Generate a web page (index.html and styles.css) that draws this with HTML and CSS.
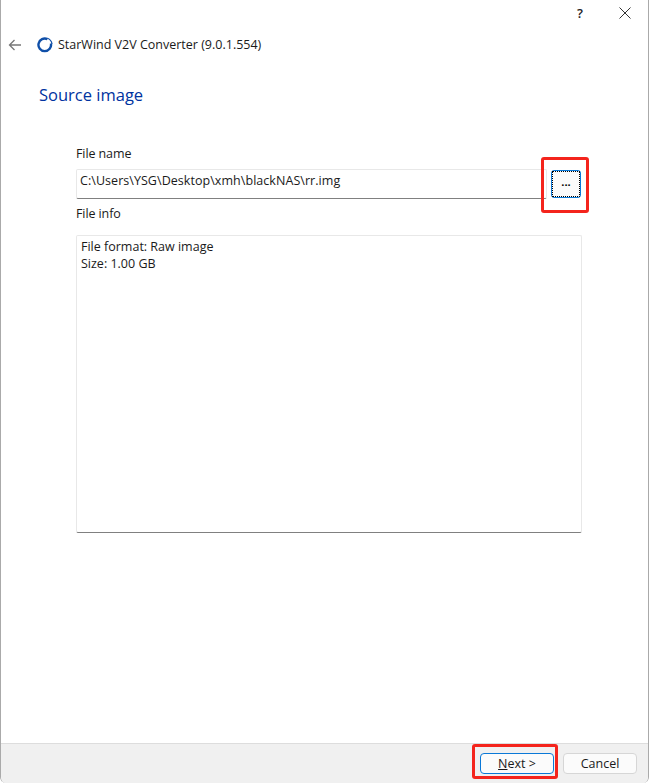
FILE: index.html
```html
<!DOCTYPE html>
<html lang="en">
<head>
<meta charset="utf-8">
<title>StarWind V2V Converter</title>
<link rel="stylesheet" href="styles.css">
</head>
<body>
<div class="window">
  <div class="titlebar">
    <span class="help">?</span>
    <svg class="close" width="12" height="12" viewBox="0 0 12 12"><path d="M.5.5l11 11M11.5.5l-11 11" stroke="#333" stroke-width="1" fill="none"/></svg>
  </div>
  <div class="apphead">
    <svg class="back" width="14" height="12" viewBox="0 0 14 12"><path d="M13 6H1.500M6.500 1l-5 5 5 5" stroke="#777" stroke-width="1.300" fill="none"/></svg>
    <svg class="logo" width="16" height="16" viewBox="0 0 16 16"><path d="M10.500 2.200A6.300 6.300 0 1 0 13.900 6.500" stroke="#0f4fa8" stroke-width="2.400" fill="none"/><path d="M10.500 1.300A7.200 7.200 0 0 1 15 7" stroke="#0f4fa8" stroke-width="1.200" fill="none"/></svg>
    <span class="apptitle">StarWind V2V Converter (9.0.1.554)</span>
  </div>
  <h1 class="heading">Source image</h1>
  <div class="form">
    <div class="label first">File name</div>
    <div class="filerow">
      <div class="input">C:\Users\YSG\Desktop\xmh\blackNAS\rr.img</div>
      <button class="browse"><span class="focus">...</span><span class="mark mark-browse"></span></button>
    </div>
    <div class="label second">File info</div>
    <div class="info">File format: Raw image<br>Size: 1.00 GB</div>
  </div>
  <div class="footer">
    <button class="btn primary"><span><u>N</u>ext &gt;</span><span class="mark mark-next"></span></button>
    <button class="btn">Cancel</button>
  </div>
</div>
</body>
</html>
```
FILE: styles.css
```css
* { box-sizing: border-box; }
html, body { margin: 0; padding: 0; }
body { font-family: "Open Sans", "Noto Sans", sans-serif; font-size: 12.5px; color: #1a1a1a; background: #fff; }
.window { width: 649px; height: 783px; display: flex; flex-direction: column; background: #fff; border-left: 1px solid #aaa; border-right: 1px solid #aaa; border-radius: 0 0 6px 6px; overflow: hidden; }
.titlebar { height: 30px; display: flex; align-items: center; justify-content: flex-end; padding-right: 17px; flex: none; }
.help { font-size: 13px; font-weight: 600; margin-right: 36px; color: #222; position: relative; top: -2px; }
.close { position: relative; top: -2px; }
.apphead { height: 29px; display: flex; align-items: center; padding-left: 7px; flex: none; }
.back { margin-right: 15px; }
.logo { margin-right: 5px; }
.apptitle { font-size: 12.5px; }
.heading { margin: 24px 0 0 38px; font-size: 16.5px; line-height: 24px; font-weight: 400; color: #0033a0; }
.form { margin: 40px 0 0 75px; width: 506px; flex: 1; }
.label { line-height: 16px; letter-spacing: -.1px; }
.second { margin-top: 7px; }
.first { margin-top: -1px; }
.filerow { display: flex; margin-top: 7px; align-items: center; gap: 4px; }
.input { width: 471px; height: 30px; border: 1px solid #e8e8e8; border-bottom: 1px solid #808080; border-radius: 2px; padding: 2px 3px; line-height: 18px; letter-spacing: .05px; }
.browse { position: relative; width: 30px; height: 28px; padding: 0; border: 1px solid #0a78d7; border-radius: 3px; background: #fbfbfb; font: inherit; display: flex; }
.focus { flex: 1; border: 1px dotted #000; font-size: 11px; font-weight: 700; line-height: 20px; text-align: center; }
.info { height: 298px; margin-top: 13px; border: 1px solid #e8e8e8; border-bottom: 1px solid #808080; border-radius: 2px; padding: 2px 4px; line-height: 17px; }
.footer { height: 40px; flex: none; background: #f0f0f0; border-top: 1px solid #ddd; display: flex; justify-content: flex-end; gap: 9px; padding: 9px 11px 0 0; }
.btn { position: relative; width: 74px; height: 21px; padding: 0; border: 1px solid #d6d6d6; border-radius: 4px; background: #fbfbfb; font: inherit; color: #1a1a1a; }
.primary { border-color: #0a78d7; }
.mark { position: absolute; border: 3px solid #f4241c; border-radius: 3px; pointer-events: none; }
.mark-browse { left: -11px; top: -14px; width: 48px; height: 56px; }
.mark-next { left: -9px; top: -10px; width: 86px; height: 35px; }
```
